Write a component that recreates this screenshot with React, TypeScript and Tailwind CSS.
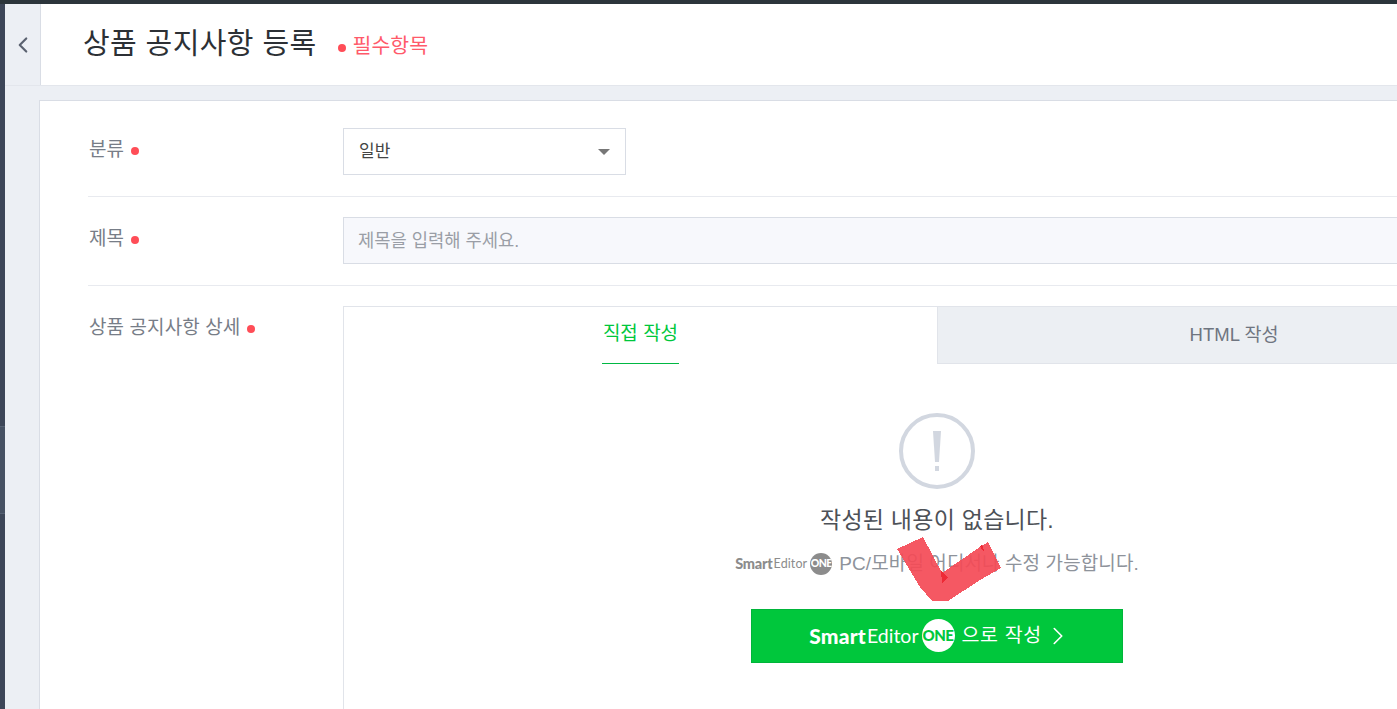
import React from 'react';
import { ChevronLeft, ChevronRight } from 'lucide-react';

const FONT = "font-['Liberation_Sans','Noto_Sans_CJK_KR',sans-serif]";

const Dot = ({ className = '' }: { className?: string }) => (
  <span className={`inline-block w-[8px] h-[8px] rounded-full bg-[#ff4d57] ${className}`} />
);

const Logo = ({ dark }: { dark?: boolean }) => (
  <span className={`inline-flex items-center font-['Lato',sans-serif] ${dark ? 'text-[#8c8c8c]' : 'text-white'}`}>
    <span className={`font-black ${dark ? 'text-[14.5px] tracking-[-0.2px]' : 'text-[21px] tracking-[0.2px]'}`}>Smart</span>
    <span className={`${dark ? 'text-[12.5px] ml-[1px]' : 'text-[19.5px] ml-[1px]'}`}>Editor</span>
    <span
      className={`rounded-full flex items-center justify-center font-black overflow-hidden tracking-[-0.5px] ${
        dark
          ? 'w-[22px] h-[22px] ml-[3px] bg-[#8c8c8c] text-white text-[10.5px]'
          : 'w-[33px] h-[33px] ml-[3px] bg-white text-[#00c73c] text-[15px]'
      }`}
    >
      ONE
    </span>
  </span>
);

export default function App() {
  return (
    <div className={`relative w-[1397px] h-[709px] overflow-hidden flex flex-col bg-[#eceff4] ${FONT}`}>
      <div className="h-[4px] shrink-0 bg-[#2c353b]" />
      <div className="flex flex-1 min-h-0">
        {/* left nav strip */}
        <div className="w-[5px] shrink-0 flex flex-col bg-[#3d4658]">
          <div className="h-[422px] shrink-0" />
          <div className="h-[88px] shrink-0 bg-[#465163] border-y border-[#566173]" />
        </div>

        <div className="flex-1 min-w-0 flex flex-col">
          {/* page header */}
          <div className="h-[82px] shrink-0 flex bg-white border-b border-[#e3e6ec]">
            <div className="w-[36px] shrink-0 flex items-center justify-center bg-[#eceff4] border-r border-[#d9dde5]">
              <ChevronLeft className="w-[26px] h-[26px] text-[#5b6270]" strokeWidth={2} />
            </div>
            <div className="flex items-center pl-[42px]">
              <h1 className="text-[29px] font-normal text-[#2c3035] tracking-[0.4px]">상품 공지사항 등록</h1>
              <Dot className="ml-[21px] mt-[6px]" />
              <span className="ml-[7px] mt-[3px] text-[20.5px] text-[#ff5a6a]">필수항목</span>
            </div>
          </div>

          {/* form card */}
          <div className="flex-1 min-h-0 pl-[34px] pt-[14px]">
            <div className="w-[1600px] h-[640px] bg-white border-l border-t border-[#d9dde5] pl-[48px]">
              <div className="h-[96px] flex items-start border-b border-[#e8eaef] w-[1444px]">
                <div className="w-[255px] pl-[1px] pt-[35px] flex items-center text-[19px] text-[#777d87]">
                  분류<Dot className="ml-[7px] mt-[2px]" />
                </div>
                <div className="mt-[27px] w-[283px] h-[47px] flex items-center justify-between pl-[15px] pr-[15px] border border-[#d9dde5] text-[17px] text-[#444]">
                  <span>일반</span>
                  <span className="w-0 h-0 border-x-[6px] border-x-transparent border-t-[6px] border-t-[#777]" />
                </div>
              </div>

              <div className="h-[89px] flex items-start border-b border-[#e8eaef] w-[1444px]">
                <div className="w-[255px] pl-[1px] pt-[28px] flex items-center text-[19px] text-[#777d87]">
                  제목<Dot className="ml-[7px] mt-[2px]" />
                </div>
                <div className="mt-[20px] w-[1188px] h-[47px] flex items-center pl-[14px] pt-[1px] border border-[#d9dde5] bg-[#f7f8fc] text-[17.7px] text-[#9a9ea6]">
                  제목을 입력해 주세요.
                </div>
              </div>

              <div className="flex items-start">
                <div className="w-[255px] pl-[1px] pt-[28px] flex items-center text-[19px] tracking-[0.1px] text-[#777d87]">
                  상품 공지사항 상세<Dot className="ml-[7px] mt-[2px]" />
                </div>
                <div className="mt-[20px] w-[1188px] h-[500px] border border-[#e1e4ea]">
                  <div className="flex h-[57px]">
                    <div className="w-[593px] flex justify-center">
                      <div className="h-full px-[1px] flex items-center pb-[2px] border-b border-[#00b843] text-[19px] text-[#00c73c]">
                        직접 작성
                      </div>
                    </div>
                    <div className="flex-1 flex items-center justify-center bg-[#eceff3] border-b border-[#e1e4ea] border-l text-[18.5px] text-[#6f7580]">
                      HTML 작성
                    </div>
                  </div>

                  <div className="flex flex-col items-center pl-[0px] pt-[49px]">
                    <div className="w-[76px] h-[76px] rounded-full border-[4px] border-[#d2d7e0] flex items-center justify-center">
                      <svg width="12" height="46" viewBox="0 0 12 46" className="fill-[#d2d7e0]">
                        <path d="M2 3h8L8 34H4z" />
                        <rect x="4" y="38" width="4" height="5" />
                      </svg>
                    </div>
                    <p className="mt-[14px] text-[23px] leading-[34px] tracking-[0.25px] text-[#4d5157]">작성된 내용이 없습니다.</p>
                    <div className="mt-[13px] flex items-center text-[19px] tracking-[0.1px] text-[#8e939b]">
                      <Logo dark />
                      <span className="ml-[7px]">PC/모바일 어디서나 수정 가능합니다.</span>
                    </div>
                    <button className="mt-[30px] w-[372px] h-[54px] pr-[2px] flex items-center justify-center bg-[#00c73c] border border-[#00b53a] text-white text-[19.5px]">
                      <Logo />
                      <span className="ml-[7px] tracking-[0.6px]">으로 작성</span>
                      <ChevronRight className="ml-[1px] -mr-[10px] w-[30px] h-[30px]" strokeWidth={1.3} />
                    </button>
                  </div>
                </div>
              </div>
            </div>
          </div>
        </div>
      </div>

      {/* hand-drawn red check over the content */}
      <svg className="absolute left-[890px] top-[530px] pointer-events-none" width="120" height="80" viewBox="0 0 120 80" shapeRendering="crispEdges">
        <path d="M7 19L33 7L52 43L90 17L98 12L111 38L90 50L58 71L42 71L30 57Z" fill="#f44a56" fillOpacity="0.92" />
        <path d="M51 41L58 47L52 53Z" fill="#ee2a36" />
        <path d="M90 16L92 15L94 20L93 21Z" fill="#ee2a36" />
      </svg>
    </div>
  );
}
